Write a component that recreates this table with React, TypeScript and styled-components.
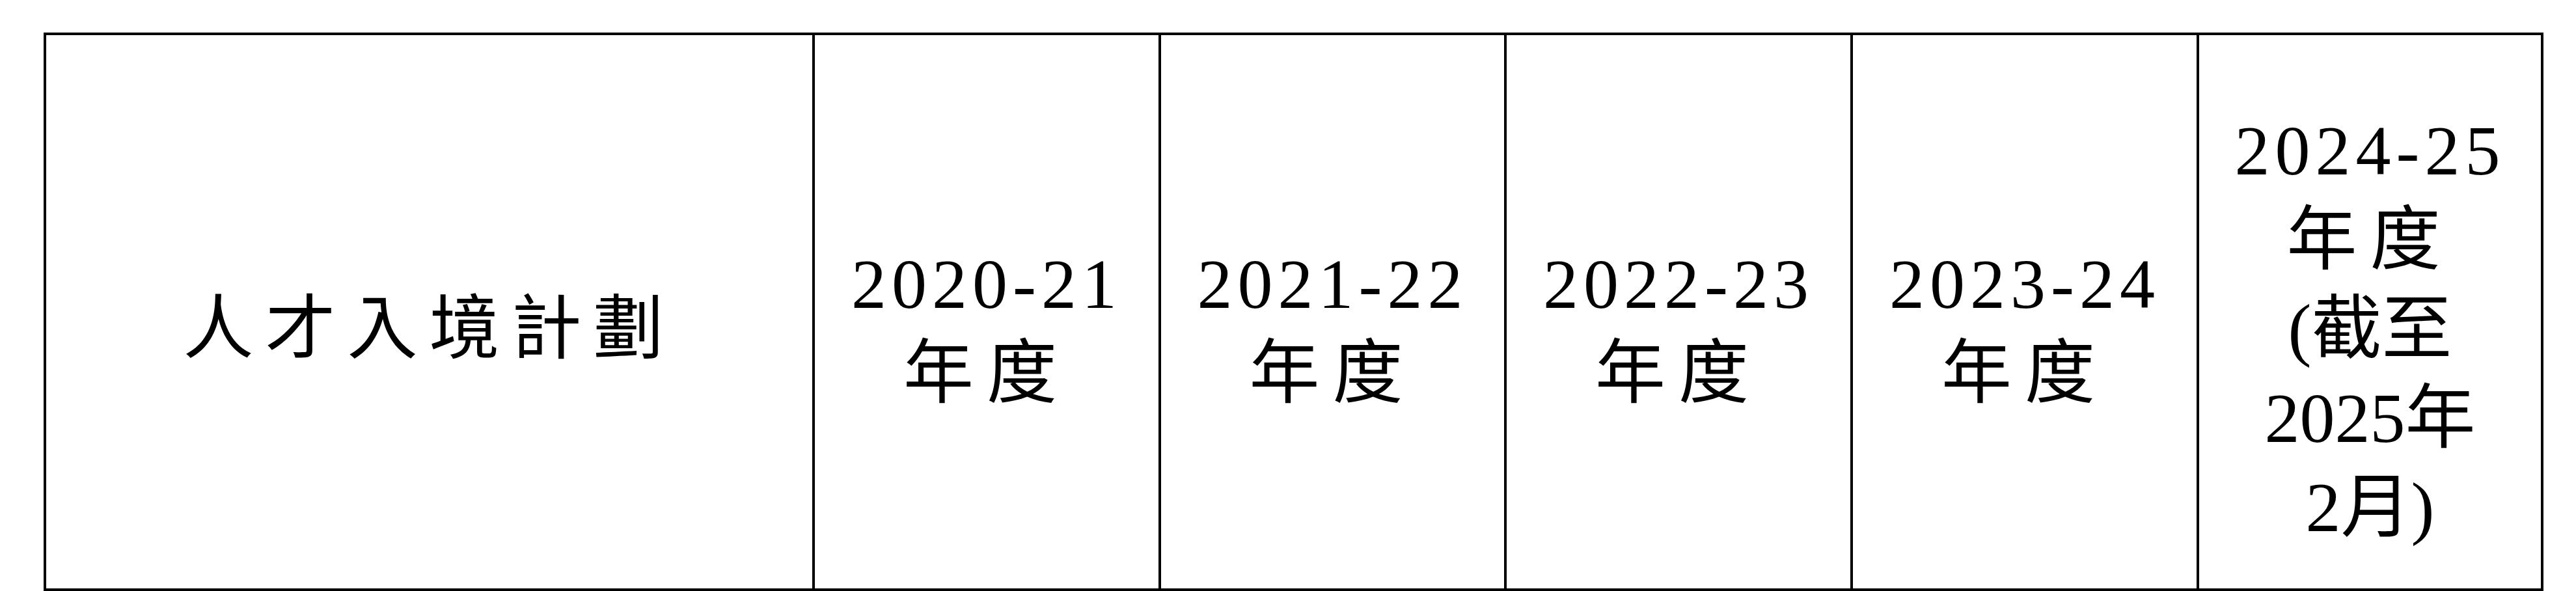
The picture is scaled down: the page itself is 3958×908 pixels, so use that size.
import styled, { createGlobalStyle } from 'styled-components';

type Line = { text: string; spacing?: number };

type Column = { width: number; lines: Line[] };

const columns: Column[] = [
  { width: 1181, lines: [{ text: '人才入境計劃', spacing: 18 }] },
  { width: 532, lines: [{ text: '2020-21', spacing: 8 }, { text: '年度', spacing: 20 }] },
  { width: 531, lines: [{ text: '2021-22', spacing: 8 }, { text: '年度', spacing: 20 }] },
  { width: 532, lines: [{ text: '2022-23', spacing: 8 }, { text: '年度', spacing: 20 }] },
  { width: 532, lines: [{ text: '2023-24', spacing: 8 }, { text: '年度', spacing: 20 }] },
  {
    width: 529,
    lines: [
      { text: '2024-25', spacing: 8 },
      { text: '年度', spacing: 20 },
      { text: '(截至' },
      { text: '2025年' },
      { text: '2月)' },
    ],
  },
];

const App = () => {
  return (
    <>
      <GlobalStyle />
      <Page>
        <Table>
          <colgroup>
            {columns.map((col, i) => (
              <col key={i} style={{ width: col.width }} />
            ))}
          </colgroup>
          <thead>
            <tr>
              {columns.map((col, i) => (
                <HeaderCell key={i}>
                  {col.lines.map((line, j) => (
                    <CellLine key={j} $spacing={line.spacing ?? 0}>
                      {line.text}
                    </CellLine>
                  ))}
                </HeaderCell>
              ))}
            </tr>
          </thead>
        </Table>
      </Page>
    </>
  );
};

export default App;

const GlobalStyle = createGlobalStyle`
  html, body {
    margin: 0;
    padding: 0;
    background: #FFFFFF;
  }
  *, *::before, *::after {
    box-sizing: border-box;
  }
`;

const Page = styled.div`
  width: 3958px;
  height: 908px;
  overflow: hidden;
  padding: 50px 0 0 67px;
  background-color: #FFFFFF;
`;

const Table = styled.table`
  table-layout: fixed;
  width: 3841px;
  border-collapse: separate;
  border-spacing: 0;
  border-top: 4px solid #000000;
  border-left: 4px solid #000000;
  color: #000000;
  font-family: "Liberation Serif", "Noto Sans CJK TC", serif;
  font-size: 108px;
  font-weight: normal;
`;

const HeaderCell = styled.th`
  height: 854px;
  padding: 52px 0 0 0;
  border-right: 4px solid #000000;
  border-bottom: 4px solid #000000;
  text-align: center;
  vertical-align: middle;
  font-weight: normal;
  line-height: 137px;
`;

const CellLine = styled.div<{ $spacing: number }>`
  white-space: nowrap;
  letter-spacing: ${(p) => p.$spacing}px;
`;
